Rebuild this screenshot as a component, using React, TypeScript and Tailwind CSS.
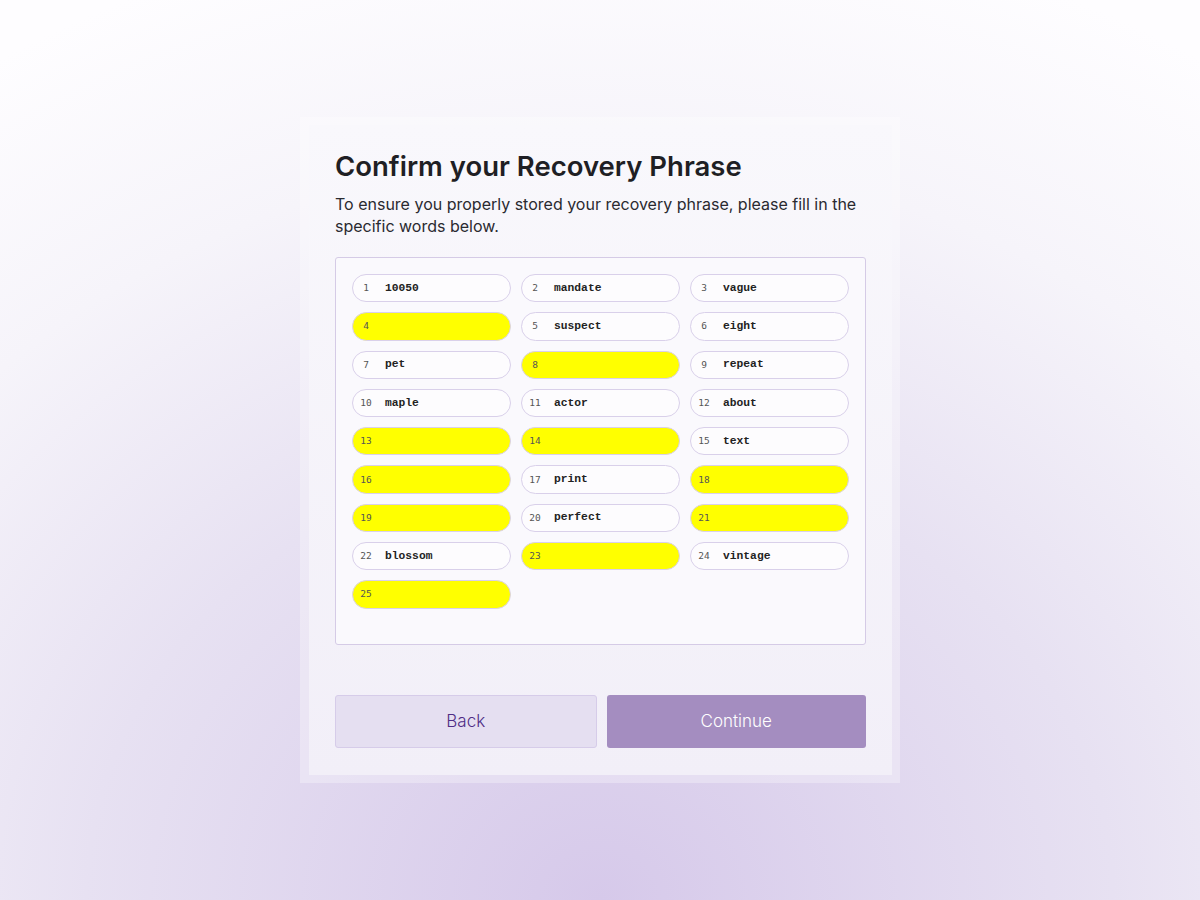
const words: (string | null)[] = [
  "10050", "mandate", "vague",
  null, "suspect", "eight",
  "pet", null, "repeat",
  "maple", "actor", "about",
  null, null, "text",
  null, "print", null,
  null, "perfect", null,
  "blossom", null, "vintage",
  null,
];

function WordPill({ index, word }: { index: number; word: string | null }) {
  const empty = word === null;
  return (
    <div
      className={
        empty
          ? "flex items-center h-[28.3px] rounded-full border border-[#d9d0ea] bg-[#ffff00] pl-[4px]"
          : "flex items-center h-[28.3px] rounded-full border border-[#d9d0ea] bg-[#fdfcfe] pl-[4px]"
      }
    >
      <span className="w-[18px] text-center text-[9.5px] text-[#555] font-['DejaVu_Sans_Mono',monospace]">
        {index}
      </span>
      {!empty && (
        <span className="ml-[10px] text-[11.3px] font-bold text-[#222] font-['Liberation_Mono',monospace]">
          {word}
        </span>
      )}
    </div>
  );
}

export default function App() {
  return (
    <div className="min-h-[900px] w-full flex justify-center bg-[radial-gradient(ellipse_95%_110%_at_50%_100%,#d6c9ea_0%,#e7e1f2_45%,#f6f4fa_75%,#fefdff_100%)] font-['Inter',sans-serif]">
      <div className="mt-[117px] h-[666px] w-[600px] p-[8px] pl-[9px] bg-white/30">
        {/* Card */}
        <div className="h-[650px] w-[583px] bg-[linear-gradient(180deg,#f9f8fc_0%,#f2eff8_100%)] px-[26px] pt-[23px] flex flex-col">
          <h1 className="text-[27.5px] leading-[37px] font-semibold text-[#1f1f24]">
            Confirm your Recovery Phrase
          </h1>
          <p className="mt-[8px] text-[16px] leading-[22px] text-[#2a2a30]">
            To ensure you properly stored your recovery phrase, please fill in the specific words below.
          </p>

          {/* Word grid */}
          <div className="mt-[20px] h-[388px] rounded-[3px] border border-[#d5cbe6] bg-[#faf9fd] p-[16px]">
            <div className="grid grid-cols-3 gap-x-[10px] gap-y-[10px]">
              {words.map((w, i) => (
                <WordPill key={i} index={i + 1} word={w} />
              ))}
            </div>
          </div>

          {/* Actions */}
          <div className="mt-[50px] flex gap-[10px]">
            <button className="flex-1 h-[53px] rounded-[3px] border border-[#d6cce9] bg-[#e5dff1] text-[17px] font-light text-[#4f2d86]">
              Back
            </button>
            <button className="flex-1 h-[53px] rounded-[3px] bg-[#a48dc0] text-[17px] font-light text-white">
              Continue
            </button>
          </div>
        </div>
      </div>
    </div>
  );
}
